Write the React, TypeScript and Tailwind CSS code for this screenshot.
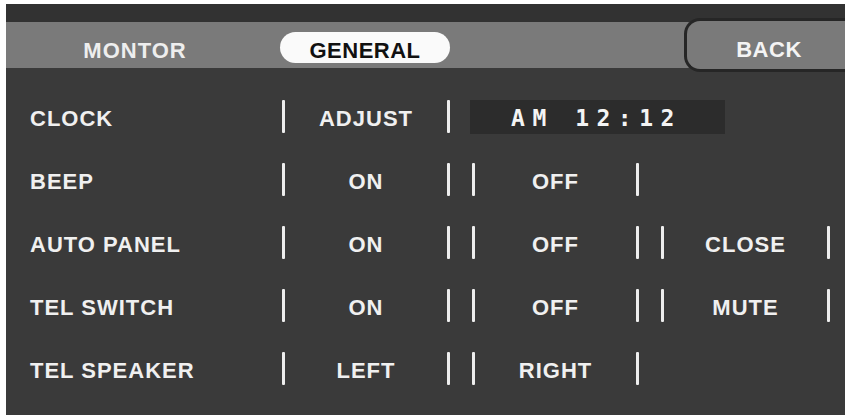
import React from "react";

type Row = {
    label: string;
    values: string[];
};

const rows: Row[] = [
    { label: "BEEP", values: ["ON", "OFF"] },
    { label: "AUTO PANEL", values: ["ON", "OFF", "CLOSE"] },
    { label: "TEL SWITCH", values: ["ON", "OFF", "MUTE"] },
    { label: "TEL SPEAKER", values: ["LEFT", "RIGHT"] },
];

const cellWidths = ["w-[162px]", "w-[161px]", "w-[163px]"];

const Bar = () => <div className="w-[3px] h-[33px] bg-[#ededed] rounded-[1px] shrink-0" />;

const Label = ({ text }: { text: string }) => (
    <div className="w-[252px] shrink-0 pt-[3px] text-[22px] font-bold tracking-[1px] text-[#f0f0f0]">{text}</div>
);

const Cell = ({ text, width }: { text: string; width: string }) => (
    <div className={`${width} shrink-0 pt-[3px] text-center text-[22px] font-bold tracking-[1px] text-[#f0f0f0]`}>{text}</div>
);

export default function App() {
    return (
        <div className="w-[851px] h-[418px] bg-white pt-[4px] pl-[6px]" style={{ fontFamily: '"Liberation Sans", Arial, sans-serif' }}>
            <div className="w-[839px] h-[411px] bg-[#3a3a3a] flex flex-col overflow-hidden">
                {/* top strip */}
                <div className="h-[18px] bg-[#323232] shrink-0" />

                {/* tab bar */}
                <div className="h-[46px] bg-[#7a7a7a] flex items-center shrink-0">
                    <div className="w-[258px] pt-[10px] text-center text-[22px] font-bold tracking-[1px] text-[#eeeeee]">MONTOR</div>
                    <div className="ml-[16px] mt-[4px] w-[170px] h-[31px] pt-[6px] rounded-full bg-[#fafafa] flex items-center justify-center text-[22px] font-bold tracking-[0.5px] text-[#111]">
                        GENERAL
                    </div>
                    <div className="ml-auto -mt-[6px] -mb-[6px] h-[54px] w-[161px] rounded-l-[16px] border-[3px] border-r-0 border-[#262626] bg-[#7a7a7a] flex items-center justify-center pl-[6px] pt-[8px] text-[22px] font-bold tracking-[0.5px] text-[#f4f4f4]">
                        BACK
                    </div>
                </div>

                {/* settings */}
                <div className="pt-[17px] pl-[24px] flex flex-col">
                    <div className="h-[63px] flex items-center">
                        <Label text="CLOCK" />
                        <Bar />
                        <Cell text="ADJUST" width="w-[162px]" />
                        <Bar />
                        <div className="ml-[20px] w-[255px] h-[34px] bg-[#2c2c2c] flex items-center justify-center pt-[4px] pr-[2px] text-[23px] font-bold tracking-[7.5px] text-[#f4f4f4]" style={{ fontFamily: '"DejaVu Sans Mono", monospace' }}>
                            AM 12:12
                        </div>
                    </div>
                    {rows.map((row) => (
                        <div key={row.label} className="h-[63px] flex items-center">
                            <Label text={row.label} />
                            {row.values.map((v, i) => (
                                <React.Fragment key={v + i}>
                                    {i > 0 && <div className="w-[22px] shrink-0" />}
                                    <Bar />
                                    <Cell text={v} width={cellWidths[i]} />
                                    <Bar />
                                </React.Fragment>
                            ))}
                        </div>
                    ))}
                </div>
            </div>
        </div>
    );
}
